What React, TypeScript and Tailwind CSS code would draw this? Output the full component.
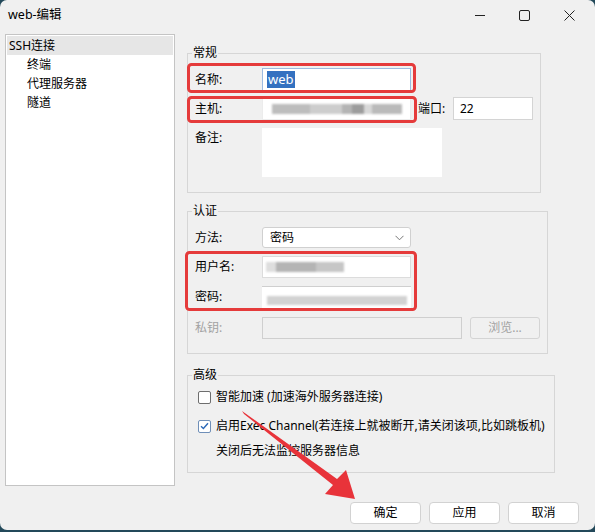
import type { ReactNode } from 'react';

// 左侧导航项
const navItems = [
  { label: 'SSH连接', level: 0, active: true },
  { label: '终端', level: 1 },
  { label: '代理服务器', level: 1 },
  { label: '隧道', level: 1 },
];

function Group({ title, className, children }: { title: string; className: string; children: ReactNode }) {
  return (
    <div className={`relative border border-[#d6d6d6] ${className}`}>
      <span className="absolute -top-[9px] left-[4px] bg-[#f0f0f0] px-px leading-[16px]">{title}</span>
      {children}
    </div>
  );
}

function Label({ children, disabled }: { children: ReactNode; disabled?: boolean }) {
  return <span className={`w-[67px] shrink-0 ${disabled ? 'text-[#a2a2a2]' : 'text-black'}`}>{children}</span>;
}

function Checkbox({ checked }: { checked?: boolean }) {
  return (
    <span
      className={`flex h-[13px] w-[13px] shrink-0 items-center justify-center rounded-[2px] border bg-white ${
        checked ? 'border-[#6f8fb8]' : 'border-[#6e6e6e]'
      }`}
    >
      {checked && (
        <svg width="9" height="8" viewBox="0 0 9 8" fill="none">
          <path d="M1 4.2L3.4 6.5L8 1.2" stroke="#2a68b8" strokeWidth="1.4" />
        </svg>
      )}
    </span>
  );
}

function Button({ children }: { children: ReactNode }) {
  return (
    <button className="flex h-[22px] w-[71px] items-center justify-center rounded-[4px] border border-[#d2d2d2] bg-white text-black">
      {children}
    </button>
  );
}

export default function App() {
  return (
    <div className="h-[532px] w-[595px] bg-[#23495a] font-['Noto_Sans','Noto_Sans_CJK_SC',sans-serif] text-[12px] leading-none text-black">
      <div className="relative flex h-[530px] flex-col overflow-hidden rounded-[7px] bg-[#f0f0f0]">
        {/* 标题栏 */}
        <div className="flex h-[30px] items-center pl-[8px] pr-[3px]">
          <span className="flex-1 text-[12.5px]">web-编辑</span>
          <div className="flex h-full items-center">
            <div className="flex w-[45px] items-center justify-center">
              <svg width="10" height="10" viewBox="0 0 10 10">
                <path d="M0 5.5H10" stroke="#222" strokeWidth="1" />
              </svg>
            </div>
            <div className="flex w-[45px] items-center justify-center">
              <svg width="11" height="11" viewBox="0 0 11 11" fill="none">
                <rect x="0.5" y="0.5" width="10" height="10" rx="1.5" stroke="#222" />
              </svg>
            </div>
            <div className="flex w-[45px] items-center justify-center">
              <svg width="11" height="11" viewBox="0 0 11 11" fill="none">
                <path d="M0.5 0.5L10.5 10.5M10.5 0.5L0.5 10.5" stroke="#222" strokeWidth="1" />
              </svg>
            </div>
          </div>
        </div>

        <div className="flex">
          {/* 导航树 */}
          <div className="ml-[5px] mt-[4px] h-[452px] w-[170px] border border-[#c4c4c4] bg-white p-px">
            {navItems.map((item) => (
              <div
                key={item.label}
                className={`flex h-[19px] items-center ${item.level ? 'pl-[20px]' : 'pl-[2px]'} ${
                  item.active ? 'bg-[#e6e6e6]' : ''
                }`}
              >
                {item.label}
              </div>
            ))}
          </div>

          <div className="ml-[12px] flex flex-col">
            {/* 常规 */}
            <Group title="常规" className="mt-[23px] w-[354px] pb-[15px] pl-[7px]">
              <div className="mt-[14px] flex h-[23px] items-center">
                <Label>名称:</Label>
                <div className="flex h-[23px] w-[149px] items-center border border-[#9dbbe0] bg-white pl-[4px]">
                  <span className="bg-[#3471c0] px-px py-[2px] text-[13px] text-white">web</span>
                </div>
              </div>
              <div className="mt-[6px] flex h-[23px] items-center">
                <Label>主机:</Label>
                <div className="flex h-[23px] w-[149px] items-center border border-[#ececec] bg-white pl-[9px]">
                  <div className="flex h-[10px] items-center blur-[1.2px]">
                    <span className="h-[10px] w-[38px] bg-[#bdbdbd]" />
                    <span className="h-[10px] w-[32px] bg-[#cdcdcd]" />
                    <span className="h-[10px] w-[10px] bg-[#b4b4b4]" />
                    <span className="h-[10px] w-[12px] bg-[#9c9c9c]" />
                    <span className="h-[10px] w-[8px] bg-[#d8d8d8]" />
                    <span className="h-[10px] w-[30px] bg-[#bababa]" />
                  </div>
                </div>
                <span className="ml-[7px] w-[35px]">端口:</span>
                <div className="flex h-[23px] w-[80px] items-center border border-[#d4d4d4] bg-white pl-[6px]">22</div>
              </div>
              <div className="mt-[8px] flex">
                <Label>
                  <span className="mt-[4px] block">备注:</span>
                </Label>
                <div className="h-[49px] w-[180px] bg-white" />
              </div>
            </Group>

            {/* 认证 */}
            <Group title="认证" className="mt-[18px] w-[361px] pb-[14px] pl-[7px]">
              <div className="mt-[15px] flex h-[21px] items-center">
                <Label>方法:</Label>
                <div className="flex h-[21px] w-[149px] items-center justify-between rounded-[3px] border border-[#d0d0d0] bg-white pl-[7px] pr-[6px]">
                  <span>密码</span>
                  <svg width="9" height="6" viewBox="0 0 9 6" fill="none">
                    <path d="M0.5 0.8L4.5 4.8L8.5 0.8" stroke="#777" />
                  </svg>
                </div>
              </div>
              <div className="mt-[8px] flex h-[22px] items-center">
                <Label>用户名:</Label>
                <div className="flex h-[22px] w-[149px] items-center border border-[#dcdcdc] bg-white pl-[3px]">
                  <div className="flex h-[10px] items-center blur-[1.2px]">
                    <span className="h-[10px] w-[10px] bg-[#dedede]" />
                    <span className="h-[10px] w-[40px] bg-[#b4b4b4]" />
                    <span className="h-[10px] w-[28px] bg-[#c6c6c6]" />
                  </div>
                </div>
              </div>
              <div className="mt-[8px] flex h-[22px] items-center">
                <Label>密码:</Label>
                <div className="flex h-[22px] w-[149px] items-end border-t border-[#cfcfcf] bg-white pb-[3px] pl-[5px]">
                  <span className="h-[9px] w-[140px] bg-[#d2d2d2] blur-[1.2px]" />
                </div>
              </div>
              <div className="mt-[9px] flex h-[22px] items-center">
                <Label disabled>私钥:</Label>
                <div className="h-[22px] w-[200px] border border-[#cfcfcf] bg-[#f0f0f0]" />
                <div className="ml-[8px] flex h-[22px] w-[70px] items-center justify-center rounded-[3px] border border-[#d4d4d4] text-[#a2a2a2]">
                  浏览...
                </div>
              </div>
            </Group>

            {/* 高级 */}
            <Group title="高级" className="mt-[21px] w-[368px] pb-[11px] pl-[10px]">
              <div className="mt-[11px] flex h-[20px] items-center gap-[5px]">
                <Checkbox />
                <span>智能加速 (加速海外服务器连接)</span>
              </div>
              <div className="mt-[9px] flex h-[20px] items-center gap-[5px]">
                <Checkbox checked />
                <span>启用Exec Channel(若连接上就被断开,请关闭该项,比如跳板机)</span>
              </div>
              <div className="mt-[5px] flex h-[20px] items-center pl-[18px]">关闭后无法监控服务器信息</div>
            </Group>
          </div>
        </div>

        {/* 底部按钮 */}
        <div className="mt-[16px] flex justify-end gap-[8px] pr-[16px]">
          <Button>确定</Button>
          <Button>应用</Button>
          <Button>取消</Button>
        </div>

        {/* 标注：红框与箭头 */}
        <svg className="pointer-events-none absolute inset-0" width="595" height="530" fill="none">
          <rect x="188.5" y="64.5" width="226" height="27" rx="3" stroke="#e53b3b" strokeWidth="3" />
          <rect x="188.5" y="97.5" width="227" height="24" rx="3" stroke="#e53b3b" strokeWidth="3" />
          <rect x="186.5" y="252.5" width="229" height="57" rx="3" stroke="#e53b3b" strokeWidth="3" />
          <polygon
            points="242,411 337,479 346,470 355,499 325,494 333,485 244,414"
            fill="#e8333a"
          />
        </svg>
      </div>
    </div>
  );
}
